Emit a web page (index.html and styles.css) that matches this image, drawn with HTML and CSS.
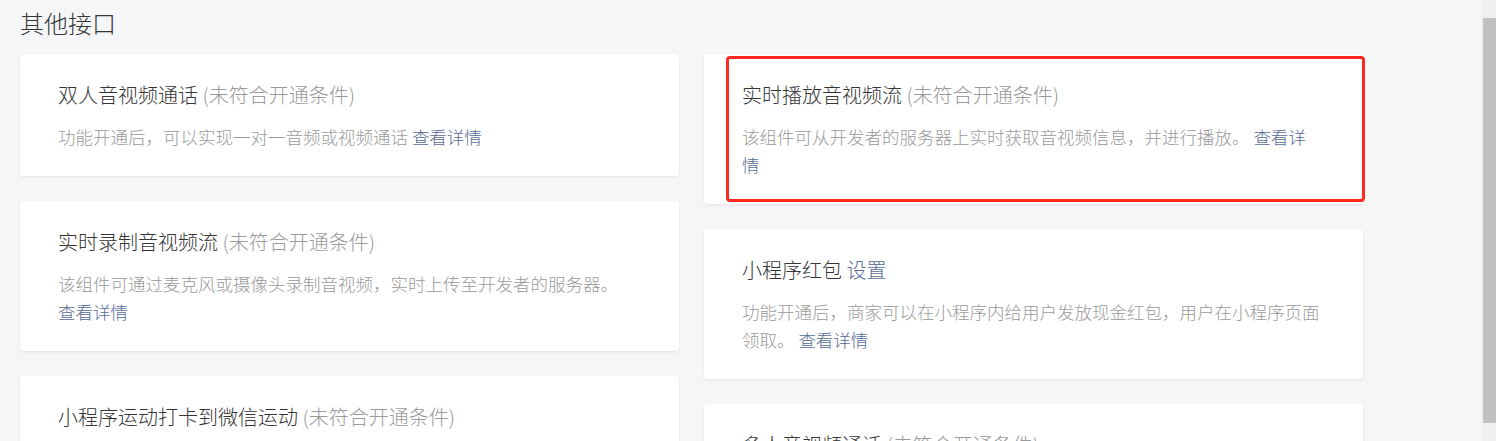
FILE: index.html
```html
<!DOCTYPE html>
<html lang="zh-CN">
<head>
    <meta charset="UTF-8">
    <meta name="viewport" content="width=device-width, initial-scale=1.0">
    <title>其他接口</title>
    <link rel="stylesheet" href="styles.css">
</head>
<body>
    <div class="page">
        <main class="main">
            <h2 class="section-title">其他接口</h2>
            <div class="columns">
                <div class="column">
                    <div class="card">
                        <div class="card-title">双人音视频通话 <span class="status">(未符合开通条件)</span></div>
                        <p class="card-desc">功能开通后，可以实现一对一音频或视频通话 <a href="#">查看详情</a></p>
                    </div>
                    <div class="card">
                        <div class="card-title">实时录制音视频流 <span class="status">(未符合开通条件)</span></div>
                        <p class="card-desc">该组件可通过麦克风或摄像头录制音视频，实时上传至开发者的服务器。 <a href="#" class="nowrap">查看详情</a></p>
                    </div>
                    <div class="card">
                        <div class="card-title">小程序运动打卡到微信运动 <span class="status">(未符合开通条件)</span></div>
                        <p class="card-desc">功能开通后，可以将用户在小程序内的运动数据同步到微信运动 <a href="#">查看详情</a></p>
                    </div>
                </div>
                <div class="column">
                    <div class="card card-marked">
                        <div class="card-title">实时播放音视频流 <span class="status">(未符合开通条件)</span></div>
                        <p class="card-desc">该组件可从开发者的服务器上实时获取音视频信息，并进行播放。 <a href="#">查看详<br>情</a></p>
                        <div class="highlight"></div>
                    </div>
                    <div class="card">
                        <div class="card-title">小程序红包 <a href="#">设置</a></div>
                        <p class="card-desc">功能开通后，商家可以在小程序内给用户发放现金红包，用户在小程序页面领取。 <a href="#">查看详情</a></p>
                    </div>
                    <div class="card">
                        <div class="card-title">多人音视频通话 <span class="status">(未符合开通条件)</span></div>
                        <p class="card-desc">功能开通后，可以实现多人音频或视频通话 <a href="#">查看详情</a></p>
                    </div>
                </div>
            </div>
        </main>
        <div class="scrollbar">
            <div class="scroll-thumb"></div>
        </div>
    </div>
</body>
</html>
```

FILE: styles.css
```css
html, body {
    margin: 0;
    height: 441px;
    overflow: hidden;
}
body {
    font-family: "Noto Sans CJK SC", "Noto Sans", Arial, sans-serif;
    font-weight: 300;
    background-color: #f5f6f8;
    color: #353535;
}
.page {
    display: flex;
    height: 441px;
}
.main {
    flex: 1;
    padding: 0 20px;
    overflow: hidden;
}
.section-title {
    margin: 0;
    padding-top: 7px;
    height: 54px;
    box-sizing: border-box;
    font-size: 24px;
    font-weight: 300;
    line-height: 32px;
    color: #353535;
}
.columns {
    display: flex;
    gap: 25px;
    align-items: flex-start;
}
.column {
    width: 659px;
    display: flex;
    flex-direction: column;
    gap: 25px;
}
.card {
    position: relative;
    background: #fff;
    border-radius: 4px;
    box-shadow: 0 1px 3px rgba(0, 0, 0, 0.08);
    padding: 27px 41px 25px 38px;
}
.card-title {
    font-size: 20px;
    line-height: 28px;
    margin-bottom: 14px;
    color: #353535;
}
.status {
    color: #9a9a9a;
}
.card-desc {
    margin: 0;
    font-size: 17.5px;
    line-height: 28px;
    color: #9a9a9a;
}
a {
    color: #576b95;
    text-decoration: none;
}
.nowrap {
    white-space: nowrap;
}
.highlight {
    position: absolute;
    left: 22px;
    top: 2px;
    right: -2px;
    bottom: 2px;
    border: 3px solid #ff2a1f;
    border-radius: 4px;
}
.scrollbar {
    width: 15px;
    background: #f0f0f0;
    padding: 18px 0 18px 2px;
    box-sizing: border-box;
}
.scroll-thumb {
    height: 100%;
    background: #c1c1c1;
}
```
